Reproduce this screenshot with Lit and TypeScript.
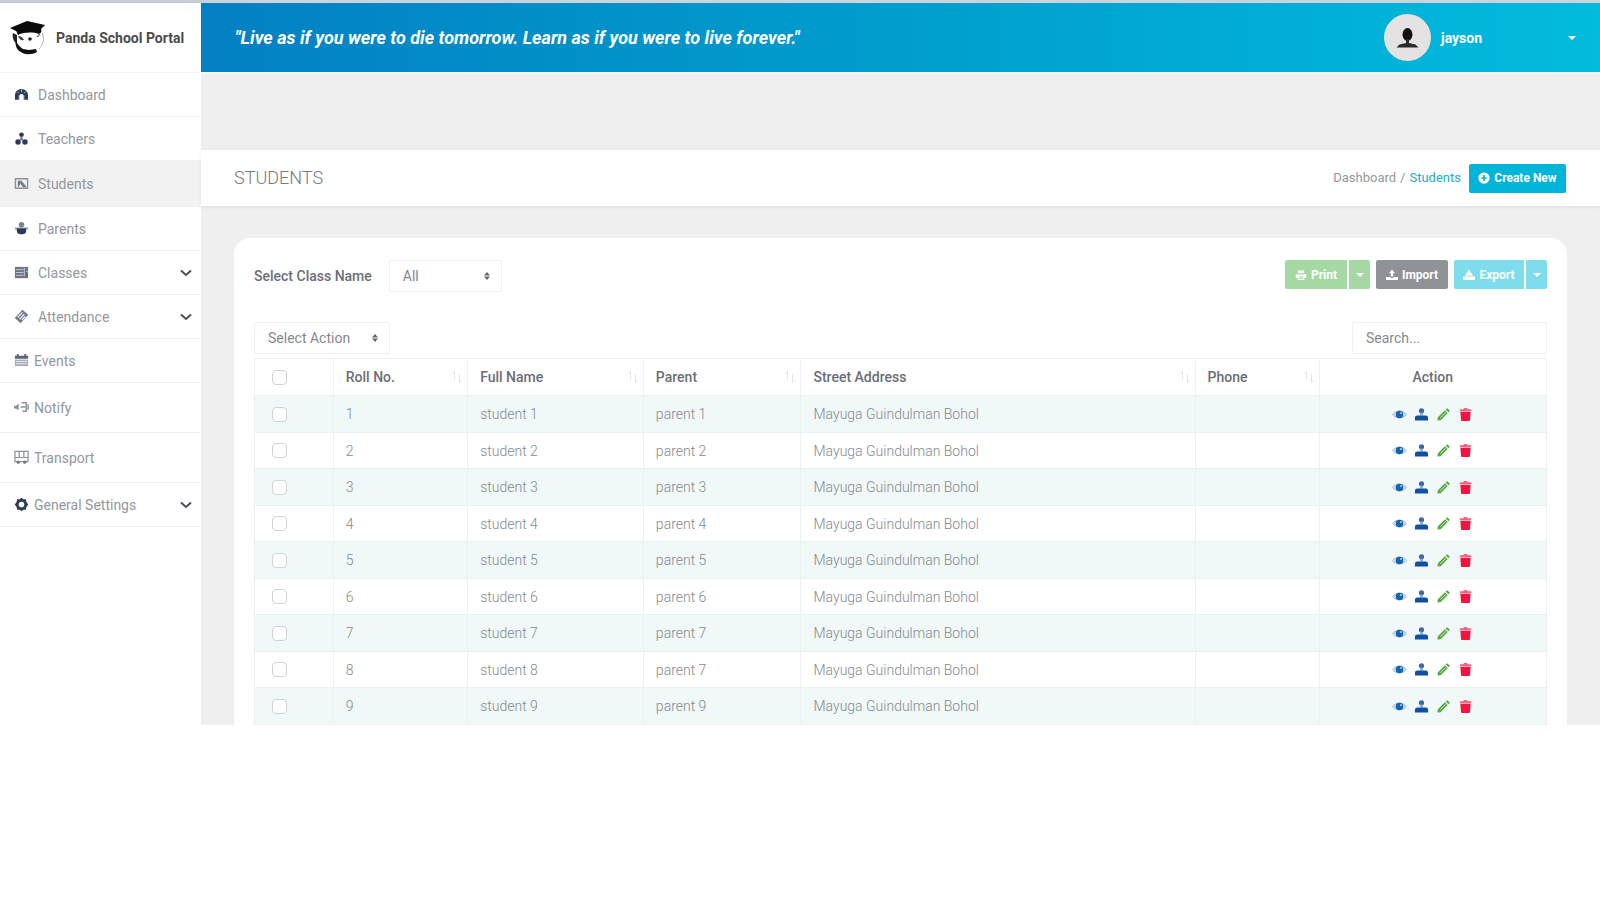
import { LitElement, html, css, svg, nothing } from "lit";
import { customElement } from "lit/decorators.js";
import { classMap } from "lit/directives/class-map.js";

const ink = "#2c3c56";

const icons: Record<string, unknown> = {
  dashboard: svg`<path fill=${ink} d="M8 2a7 7 0 0 0-7 7v4.500h4.500V10a2.500 2.500 0 0 1 5 0v3.500H15V9a7 7 0 0 0-7-7z"/><path stroke="#b9c4d2" d="M8 3v2.500M3.500 5l1.500 1.500M12.500 5 11 6.500M5.500 9v5M10.500 9v5"/>`,
  teachers: svg`<circle cx="8" cy="4" r="2.500" fill=${ink}/><path fill="#6f7c91" d="M7 6h2l.7 4H6.300z"/><circle cx="4.300" cy="11.800" r="2.900" fill=${ink}/><circle cx="11.700" cy="11.800" r="2.900" fill=${ink}/>`,
  students: svg`<path fill="none" stroke="#8a929c" stroke-width="1.500" d="M1.500 3h13v10h-13z"/><path fill="#77818e" d="M4 5h4l5 6v1H9.500L7 8.500 4.500 12H4z"/>`,
  parents: svg`<circle cx="8" cy="4" r="3" fill="#7d8695"/><path fill="#8c95a3" d="M1 7h14v2H1z"/><path fill=${ink} d="M3 8h10v2.500A3.500 3.500 0 0 1 9.500 14h-3A3.500 3.500 0 0 1 3 10.500z"/>`,
  classes: svg`<path fill="#6b7583" d="M1 2h14v12H1z"/><path stroke="#c9ced6" d="M2 5h8M2 8h8M2 11h8M11 3v9M13 7h1.500"/>`,
  attendance: svg`<path fill="#707b8b" d="M9 .8 15.200 6 7 15.200.8 9.500z"/><path stroke="#fff" stroke-width="1.200" fill="none" d="m4 9 5-5.500M6 11l5-5.500M8.500 11.500 12 8"/>`,
  events: svg`<path fill="#596474" d="M1 3h14v3H1zM3 1h2v3H3zM11 1h2v3h-2z"/><path fill="#a7aeb8" d="M1 7h14v7H1z"/><path stroke="#e8eaed" d="M2 9h12M2 11.500h12"/>`,
  notify: svg`<path fill="#8a929d" d="M0 6h2l3-2v7L2 9H0z"/><path fill="none" stroke="#8a929d" stroke-width="1.500" d="M8 3h5v9H9M7 7.500h5M14.500 4.500c1 2 1 4 0 6"/>`,
  transport: svg`<path fill="none" stroke="#8a929c" stroke-width="1.300" d="M1 1.500h14v11H1zM1 8h14M5.500 2v6M10.500 2v6"/><circle cx="4.500" cy="13" r="1.700" fill="#707a87"/><circle cx="11.500" cy="13" r="1.700" fill="#707a87"/>`,
  settings: svg`<path fill=${ink} fill-rule="evenodd" d="m8 .8 2 1.700 2.700-.2.400 2.700L15.200 8l-2.100 3-.4 2.700-2.700-.2-2 1.700-2-1.700-2.700.2-.4-2.700L.8 8l2.100-3 .4-2.700 2.700.2zM8 5a3 3 0 1 0 0 6 3 3 0 0 0 0-6z"/>`,
  eye: svg`<path fill="#d3e0ec" stroke="#9db9d6" d="M.5 8C4 3.200 12 3.200 15.500 8 12 12.800 4 12.800.5 8z"/><circle cx="8" cy="8" r="4" fill="#1465ab"/><circle cx="9.500" cy="6.500" r="1.200" fill="#9cc3e6"/>`,
  user: svg`<circle cx="8" cy="4" r="2.800" fill="#3f66a6"/><path fill="#8fa8cb" d="M6.500 6h3v3h-3z"/><path fill="#0d51a0" d="M1 14.500V11.500A2.500 2.500 0 0 1 3.500 9h9a2.500 2.500 0 0 1 2.500 2.500v3z"/>`,
  pencil: svg`<path fill="#5aa845" d="m2 11 7.500-7.500 3 3L5 14l-3.500.5zM10.300 2.700 12 1.200l2.800 2.800-1.500 1.700z"/><path stroke="#c7e5bf" d="m4.500 11.500 6-6"/>`,
  trash: svg`<path fill="#ef1540" d="M2.500 5h11l-.7 9.200a1 1 0 0 1-1 .8H4.200a1 1 0 0 1-1-.8z"/><path fill="#f4637f" d="M2 2.500h3.500L6.500 1h3l1 1.500H14v2H2z"/>`,
  plus: svg`<circle cx="8" cy="8" r="7.500" fill="#fff"/><path stroke="#00b5d8" stroke-width="2.200" d="M8 4v8M4.500 8h7"/>`,
  print: svg`<path fill="#fff" d="M4 2h8v4H4zM1 7h14v5h-2.500v2.500h-9V12H1z"/><path stroke="#a5d8a3" stroke-width="1.200" d="M5 10.500h6M5 12.500h6M4 6.500h8"/>`,
  upload: svg`<path fill="#fff" d="M8 .5 12 5.500h-2.500V10h-3V5.500H4zM0 10.500h5.500l1 1.500h3l1-1.500H16v4H0z"/>`,
  download: svg`<path fill="#fff" d="M8 .5 13.500 9H2.500zM0 10h16v4.500H0z"/>`,
};

const icon = (name: string) =>
  html`<svg class="icon" viewBox="0 0 16 16" aria-hidden="true">${icons[name]}</svg>`;

const chevron = html`<svg class="chevron" viewBox="0 0 12 8" aria-hidden="true">
  <path d="M1 1.500l5 4.500 5-4.500" fill="none" stroke="#4a4f57" stroke-width="2" />
</svg>`;

const caret = html`<svg class="caret" viewBox="0 0 8 4" aria-hidden="true">
  <path d="M0 0h8L4 4z" fill="#fff" />
</svg>`;

const sorter = html`<svg class="sorter" viewBox="0 0 12 14" aria-hidden="true">
  <path d="M1 4l2.500-2.500V10M11 10l-2.500 2.500V4" fill="none" stroke="#e3e5e8" />
</svg>`;

const menu = [
  { id: "dashboard", label: "Dashboard" },
  { id: "teachers", label: "Teachers" },
  { id: "students", label: "Students", active: true },
  { id: "parents", label: "Parents" },
  { id: "classes", label: "Classes", more: true },
  { id: "attendance", label: "Attendance", more: true },
  { id: "events", label: "Events", near: true },
  { id: "notify", label: "Notify", near: true, tall: true },
  { id: "transport", label: "Transport", near: true, tall: true },
  { id: "settings", label: "General Settings", near: true, more: true },
];

const columns = ["Roll No.", "Full Name", "Parent", "Street Address", "Phone"];

const rows = [1, 2, 3, 4, 5, 6, 7, 8, 9].map((n) => ({
  roll: n,
  name: `student ${n}`,
  parent: `parent ${n === 8 ? 7 : n}`,
  address: "Mayuga Guindulman Bohol",
}));

@customElement("app-root")
export class AppRoot extends LitElement {
  static styles = css`
    :host {
      display: block;
      font-family: Roboto, "Liberation Sans", sans-serif;
      font-size: 14px;
      line-height: 20px;
      color: #92979d;
      background: #fff;
    }
    * { box-sizing: border-box; }
    a { color: inherit; text-decoration: none; }
    button, input, select { font: inherit; }
    h1, ul, ol, p { margin: 0; padding: 0; list-style: none; }
    .icon { width: 14px; height: 14px; flex: none; }
    .frame { border-top: 3px solid #ccd3dc; }
    .shell { display: flex; }

    .side {
      width: 201px;
      flex: none;
      background: #fff;
      box-shadow: 0 0 5px rgba(0, 0, 0, 0.12);
    }
    .brand {
      display: flex;
      align-items: center;
      gap: 9px;
      height: 70px;
      padding-left: 9px;
      border-bottom: 1px solid #f4f4f4;
      font-size: 14px;
      font-weight: 700;
      white-space: nowrap;
      color: #4b4b4d;
    }
    .logo { width: 38px; height: 36px; flex: none; }
    .item {
      display: flex;
      align-items: center;
      gap: 9px;
      min-height: 44px;
      padding: 0 9px 0 14px;
      border-bottom: 1px solid #f0f0f0;
    }
    .item .icon { width: 15px; height: 15px; }
    .item.near { gap: 5px; }
    .item.tall { min-height: 50px; }
    .item.active { min-height: 46px; background: #f2f2f2; }
    .chevron { width: 12px; height: 8px; margin-left: auto; }

    .main { flex: 1; min-width: 0; background: #efefef; }
    .top {
      display: flex;
      align-items: center;
      justify-content: space-between;
      height: 69px;
      padding: 0 24px 0 34px;
      background: linear-gradient(90deg, #0380c3, #009ecd 50%, #02bbdd);
      box-shadow: 0 2px 0 #f8f9fa;
      color: #fff;
    }
    .quote { font-size: 18px; font-weight: 700; font-style: italic; }
    .account {
      display: flex;
      align-items: center;
      width: 192px;
      padding: 0;
      border: 0;
      background: none;
      color: #fff;
      font-weight: 700;
    }
    .avatar { width: 47px; height: 47px; margin-right: 10px; }
    .caret { width: 8px; height: 4px; }
    .account .caret { margin-left: auto; }

    .head {
      display: flex;
      align-items: center;
      justify-content: space-between;
      height: 56px;
      margin-top: 78px;
      padding: 0 34px 0 33px;
      background: #fff;
      box-shadow: 0 1px 3px rgba(0, 0, 0, 0.08);
    }
    h1 { font-size: 18px; font-weight: 300; color: #77797c; }
    .trail { display: flex; align-items: center; gap: 8px; font-size: 13px; }
    .trail ol { display: flex; gap: 4px; }
    .here { color: #27aacb; }
    .btn {
      display: inline-flex;
      align-items: center;
      justify-content: center;
      gap: 4px;
      height: 29px;
      padding: 0;
      border: 0;
      border-radius: 2px;
      color: #fff;
      font-size: 12px;
      font-weight: 700;
      white-space: nowrap;
    }
    .btn .icon { width: 12px; height: 12px; }
    .create { background: #00b5d8; width: 97px; }
    .green { background: #a5d8a3; width: 62px; }
    .grey { background: #8f9397; width: 72px; }
    .cyan { background: #7edcec; width: 70px; }
    .split { display: flex; gap: 2px; }
    .split .btn:first-child { border-radius: 2px 0 0 2px; }
    .split .btn:last-child { border-radius: 0 2px 2px 0; width: 21px; }

    .card {
      margin: 32px 33px 0;
      padding: 22px 20px 0;
      border-radius: 16px 16px 0 0;
      background: #fff;
    }
    .bar { display: flex; align-items: center; justify-content: space-between; }
    .filter { display: flex; align-items: center; gap: 17px; color: #6b6e78; font-weight: 500; }
    .buttons { display: flex; gap: 6px; padding-bottom: 3px; }
    .field {
      height: 32px;
      border: 1px solid #f0f0f0;
      border-radius: 2px;
      background: #fff;
      color: #85898f;
      font-weight: 400;
      padding: 0 13px;
      outline: 0;
    }
    select.field {
      appearance: none;
      background: #fff
        url("data:image/svg+xml,%3Csvg xmlns='http://www.w3.org/2000/svg' width='6' height='8'%3E%3Cpath d='M0 3.500L3 0l3 3.500zM0 4.500h6L3 8z' fill='%23666'/%3E%3C/svg%3E")
        no-repeat right 11px center;
    }
    .class-select { width: 113px; }
    .action-select { width: 136px; }
    .search { width: 195px; }
    .search::placeholder { color: #85898f; opacity: 1; }
    .tools { margin: 30px 0 4px; }

    table { width: 100%; border-collapse: collapse; table-layout: fixed; }
    th, td {
      padding: 0 12px;
      border: 1px solid #ebf0f0;
      text-align: left;
    }
    th { height: 37px; font-weight: 500; color: #6b6e75; border-color: #f1f1f1; }
    td { height: 36px; font-weight: 300; color: #85898f; }
    tbody tr:nth-child(odd) { background: #f0f8f8; }
    tbody tr:nth-child(odd) td { height: 37px; }
    .c-check { width: 6.1%; }
    .c-roll { width: 10.4%; }
    .c-name { width: 13.6%; }
    .c-parent { width: 12.2%; }
    .c-street { width: 30.5%; }
    .c-phone { width: 9.6%; }
    .pick { padding-left: 17px; }
    .label { display: flex; align-items: center; justify-content: space-between; margin-right: -8px; }
    .sorter { width: 12px; height: 14px; }
    .center { text-align: center; }
    .tick {
      appearance: none;
      display: block;
      width: 15px;
      height: 15px;
      margin: 0;
      border: 1px solid #cfd2d5;
      border-radius: 4px;
      background: #fff;
    }
    .acts { display: flex; justify-content: center; gap: 7px; }
    .act { display: flex; padding: 0; border: 0; background: none; }
    .act .icon { width: 15px; height: 15px; }
  `;

  render() {
    return html`
      <div class="frame">
        <div class="shell">
          <nav class="side" aria-label="Main">
            <a class="brand" href="#">
              <svg class="logo" viewBox="0 0 38 36" aria-hidden="true">
                <path d="M33 13c3 6 1 12-3 16M6 22c2 7 6 11 13 12" fill="none" stroke="#aaa" />
                <path d="M4 13l4 2v9l-3-3c-1-3-2-5-1-8z" fill="#222" />
                <path d="M8 14c6 4 16 4 24 0 4 10-2 18-11 18-8 0-14-8-13-18z" fill="#fff" />
                <path d="M7 21c2 4 4 6 7 8l6 1 7-1 1 3c-5 3-12 3-16 0-4-2-6-6-5-11z" fill="#111" />
                <path d="M1 8L18 1l18 4-4 4c1 3 0 4-2 5-6-2-15-2-21 1-1-2-1-3-2-4z" fill="#0b0b0b" />
                <path d="M9 16c3 0 5 2 6 4-3 1-4 0-6-4z" fill="#444" />
                <circle cx="21" cy="19" r="1.800" fill="#222" />
                <path d="M28 17l3-3" fill="none" stroke="#777" stroke-width="1.500" />
              </svg>
              Panda School Portal
            </a>
            <ul>
              ${menu.map(
                (m) => html`<li>
                  <a class=${classMap({ item: true, active: !!m.active, near: !!m.near, tall: !!m.tall })} href="#">
                    ${icon(m.id)}<span>${m.label}</span>${m.more ? chevron : nothing}
                  </a>
                </li>`
              )}
            </ul>
          </nav>
          <div class="main">
            <header class="top">
              <p class="quote">"Live as if you were to die tomorrow. Learn as if you were to live forever."</p>
              <button class="account" type="button">
                <svg class="avatar" viewBox="0 0 47 47" aria-hidden="true">
                  <circle cx="23.500" cy="23.500" r="23.500" fill="#e4e2e2" />
                  <ellipse cx="23.500" cy="20.500" rx="5" ry="6.500" fill="#111" />
                  <path d="M22 25h3v4l6.500 1.500 3 3h-22l3-3L22 29z" fill="#2a2a2a" />
                </svg>
                <span>jayson</span>${caret}
              </button>
            </header>
            <section class="head">
              <h1>STUDENTS</h1>
              <div class="trail">
                <ol>
                  <li><a href="#">Dashboard</a></li>
                  <li>/</li>
                  <li class="here">Students</li>
                </ol>
                <button class="btn create" type="button">${icon("plus")}Create New</button>
              </div>
            </section>
            <main class="card">
              <div class="bar">
                <label class="filter">Select Class Name
                  <select class="field class-select"><option>All</option></select>
                </label>
                <div class="buttons">
                  <div class="split">
                    <button class="btn green" type="button">${icon("print")}Print</button>
                    <button class="btn green" type="button" aria-label="Print options">${caret}</button>
                  </div>
                  <button class="btn grey" type="button">${icon("upload")}Import</button>
                  <div class="split">
                    <button class="btn cyan" type="button">${icon("download")}Export</button>
                    <button class="btn cyan" type="button" aria-label="Export options">${caret}</button>
                  </div>
                </div>
              </div>
              <div class="bar tools">
                <select class="field action-select" aria-label="Select Action"><option>Select Action</option></select>
                <input class="field search" type="search" placeholder="Search..." aria-label="Search" />
              </div>
              <table>
                <colgroup>
                  <col class="c-check" /><col class="c-roll" /><col class="c-name" /><col class="c-parent" />
                  <col class="c-street" /><col class="c-phone" /><col />
                </colgroup>
                <thead>
                  <tr>
                    <th class="pick"><input class="tick" type="checkbox" aria-label="Select all" /></th>
                    ${columns.map((c) => html`<th><div class="label">${c}${sorter}</div></th>`)}
                    <th class="center">Action</th>
                  </tr>
                </thead>
                <tbody>
                  ${rows.map(
                    (r) => html`<tr>
                      <td class="pick"><input class="tick" type="checkbox" aria-label="Select ${r.name}" /></td>
                      <td>${r.roll}</td>
                      <td>${r.name}</td>
                      <td>${r.parent}</td>
                      <td>${r.address}</td>
                      <td></td>
                      <td>
                        <div class="acts">
                          <button class="act" type="button" aria-label="View">${icon("eye")}</button>
                          <button class="act" type="button" aria-label="Profile">${icon("user")}</button>
                          <button class="act" type="button" aria-label="Edit">${icon("pencil")}</button>
                          <button class="act" type="button" aria-label="Delete">${icon("trash")}</button>
                        </div>
                      </td>
                    </tr>`
                  )}
                </tbody>
              </table>
            </main>
          </div>
        </div>
      </div>
    `;
  }
}
